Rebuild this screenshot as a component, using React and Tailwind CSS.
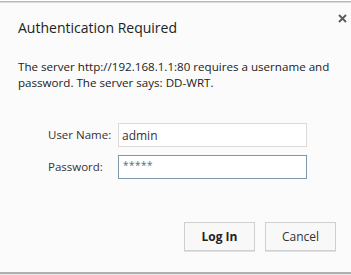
import React, { useState } from 'react';

const App = () => {
  const [user, setUser] = useState('admin');
  const [pass, setPass] = useState('*****');

  return (
    <div
      className="w-[351px] h-[275px] bg-white flex flex-col text-[#222]"
      style={{ fontFamily: '"Open Sans", "Noto Sans", sans-serif' }}
    >
      <div className="mt-px h-[2px] bg-[#b8b8b8] border-b border-[#dcdcdc]" />
      <div className="flex-1 bg-[#fbfbfb] flex flex-col px-[18px]">
        <div className="flex items-start justify-between mt-[15px]">
          <h2 className="text-[14px] leading-[20px] text-[#222]">Authentication Required</h2>
          <svg width="9" height="9" viewBox="0 0 9 9" className="-mr-[14px] -mt-[4px]">
            <path d="M1 1L8 8M8 1L1 8" stroke="#5a5a5a" strokeWidth="1.8" />
          </svg>
        </div>

        <p className="mt-[21px] text-[11.6px] leading-[16px] text-[#222] whitespace-nowrap">
          The server http://192.168.1.1:80 requires a username and
          <br />
          password. The server says: DD-WRT.
        </p>

        <div className="mt-[32px] flex flex-col gap-[8px]">
          <div className="flex items-center">
            <label className="w-[70px] pl-[30px] text-[11.5px] text-[#333] shrink-0 box-content">User Name:</label>
            <input
              value={user}
              onChange={(e) => setUser(e.target.value)}
              className="w-[189px] h-[24px] bg-white border border-[#dadada] px-[3px] text-[12px] text-[#333] outline-none"
            />
          </div>
          <div className="flex items-center">
            <label className="w-[70px] pl-[30px] text-[11.5px] text-[#333] shrink-0 box-content">Password:</label>
            <input
              value={pass}
              onChange={(e) => setPass(e.target.value)}
              className="w-[189px] h-[24px] bg-white border border-[#7d98ab] px-[4px] pb-[4px] text-[10px] text-[#666] tracking-[0.5px] outline-none"
            />
          </div>
        </div>

        <div className="mt-[43px] flex justify-end gap-[10px] -mr-[3px]">
          <button className="w-[71px] h-[29px] bg-[#f8f8f8] border border-[#cfcfcf] shadow-[0_1px_0_#e0e0e0] text-[12px] font-bold text-[#222]">
            Log In
          </button>
          <button className="w-[71px] h-[29px] bg-[#f8f8f8] border border-[#cfcfcf] shadow-[0_1px_0_#e0e0e0] text-[12px] text-[#333]">
            Cancel
          </button>
        </div>
      </div>
      <div className="h-[2px] bg-[#b0b0b0]" />
      <div className="h-[1px] bg-[#e6e6e6]" />
    </div>
  );
};

export default App;
